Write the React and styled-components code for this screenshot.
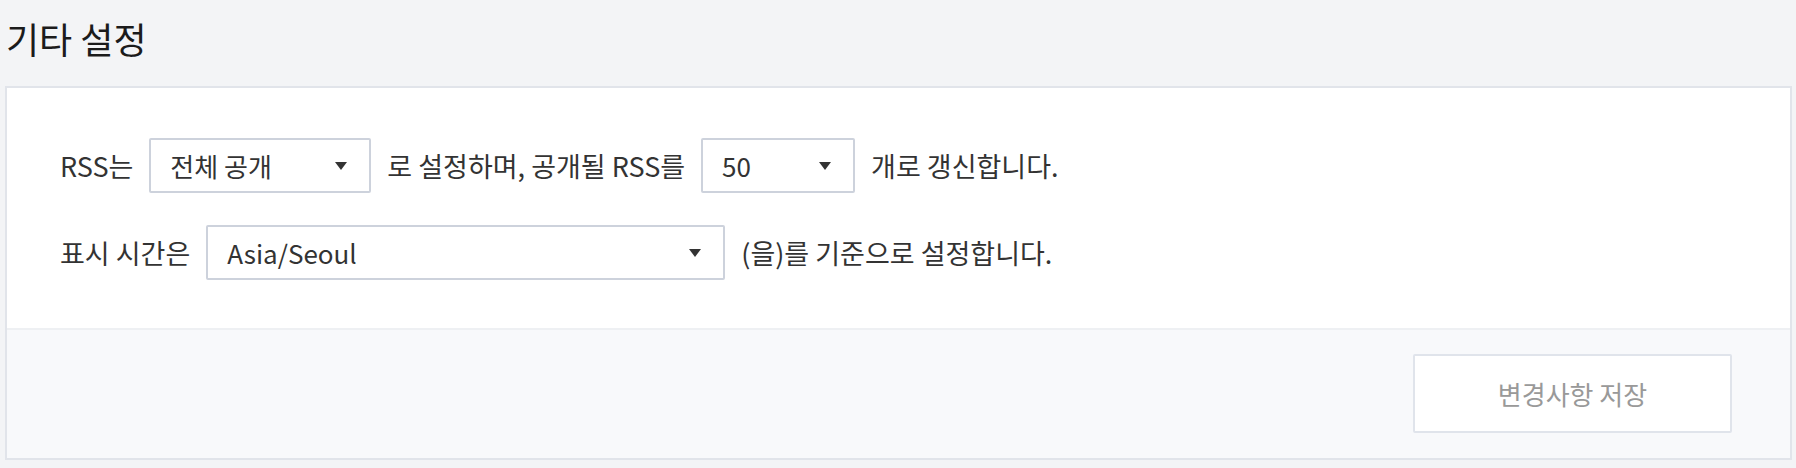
import styled, { createGlobalStyle } from 'styled-components';

const GlobalStyle = createGlobalStyle`
  html, body {
    margin: 0;
    padding: 0;
    background: #f3f4f6;
  }
  body {
    font-family: "Noto Sans CJK KR", "Noto Sans", sans-serif;
    color: #333;
  }
`;

const Page = styled.div`
  padding: 0 4px 10px 5px;
`;

const Title = styled.h2`
  margin: 0;
  padding: 17px 0 26px 1px;
  font-size: 36px;
  font-weight: 400;
  line-height: 1.2;
  color: #1b1b1b;
`;

const Card = styled.section`
  background: #fff;
  border: 2px solid #e1e4ea;
`;

const Body = styled.div`
  display: flex;
  flex-direction: column;
  gap: 32px;
  padding: 50px 0 48px 53px;
`;

const Row = styled.div`
  display: flex;
  align-items: center;
  gap: 16px;
  font-size: 27px;
  line-height: 1;
  color: #333;
`;

const SelectBox = styled.div`
  box-sizing: border-box;
  display: flex;
  align-items: center;
  justify-content: space-between;
  width: ${(p) => p.$width}px;
  height: 55px;
  padding: 0 22px 0 19px;
  background: #fff;
  border: 2px solid #cdd2dc;
  border-radius: 2px;
  font-size: 26px;
  color: #333;
`;

const Arrow = styled.span`
  width: 0;
  height: 0;
  border-left: 6px solid transparent;
  border-right: 6px solid transparent;
  border-top: 8px solid #333;
`;

const Footer = styled.div`
  display: flex;
  justify-content: flex-end;
  padding: 24px 58px 25px;
  background: #f8f9fb;
  border-top: 2px solid #eef0f3;
`;

const SaveButton = styled.button`
  width: 319px;
  height: 79px;
  background: #fff;
  border: 2px solid #e0e4eb;
  border-radius: 2px;
  font-family: inherit;
  font-size: 26px;
  color: #999;
`;

function Select({ width, value }) {
  return (
    <SelectBox $width={width}>
      <span>{value}</span>
      <Arrow />
    </SelectBox>
  );
}

export default function App() {
  return (
    <Page>
      <GlobalStyle />
      <Title>기타 설정</Title>
      <Card>
        <Body>
          <Row>
            <span>RSS는</span>
            <Select width={222} value="전체 공개" />
            <span>로 설정하며, 공개될 RSS를</span>
            <Select width={154} value="50" />
            <span>개로 갱신합니다.</span>
          </Row>
          <Row>
            <span>표시 시간은</span>
            <Select width={519} value="Asia/Seoul" />
            <span>(을)를 기준으로 설정합니다.</span>
          </Row>
        </Body>
        <Footer>
          <SaveButton type="button">변경사항 저장</SaveButton>
        </Footer>
      </Card>
    </Page>
  );
}
